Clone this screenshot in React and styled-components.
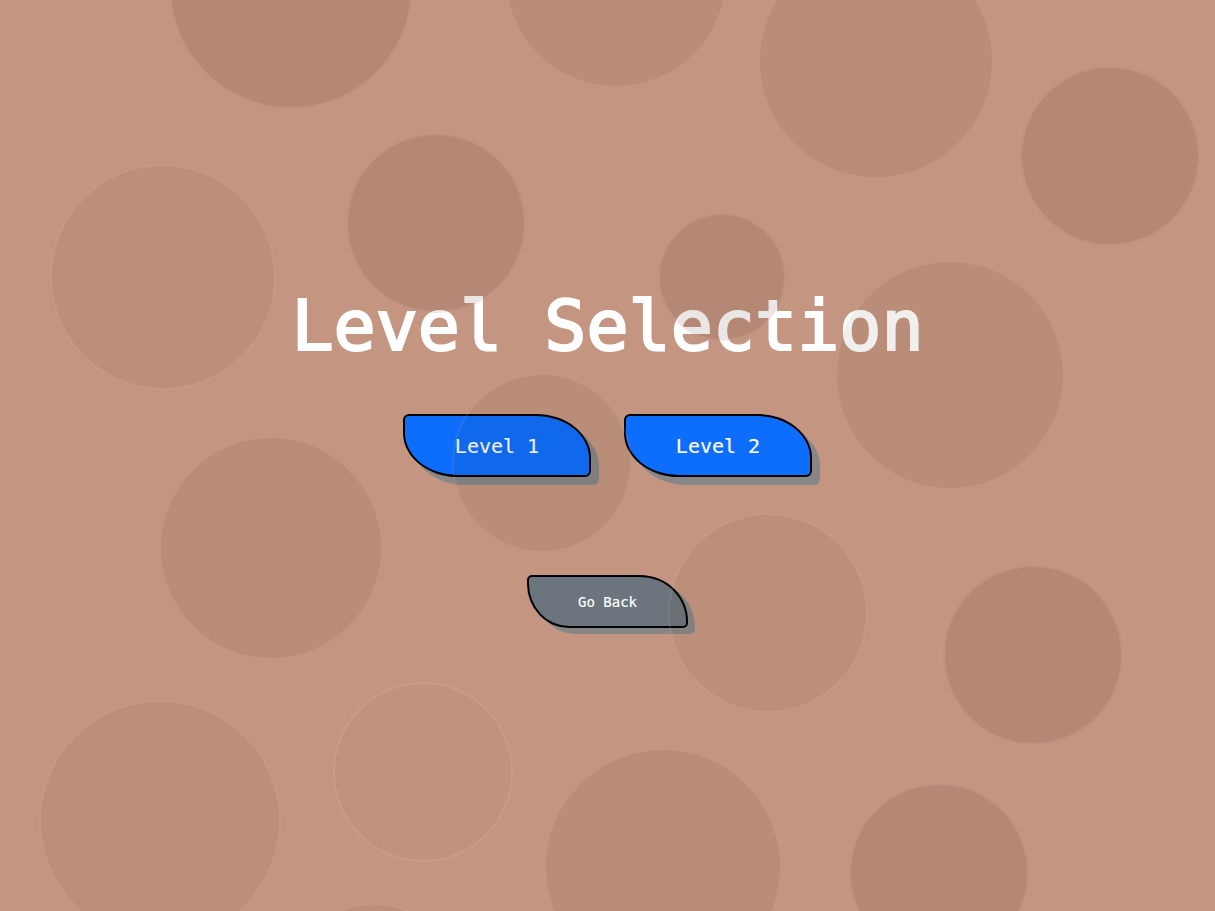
import React from "react";
import styled, { createGlobalStyle } from "styled-components";

const GlobalStyle = createGlobalStyle`
  html, body {
    margin: 0;
    padding: 0;
    background: #c49682;
    overflow: hidden;
  }
  * { box-sizing: border-box; }
`;

const Page = styled.main`
  position: relative;
  width: 100%;
  height: 911px;
  overflow: hidden;
  background: #c49682;
  display: flex;
  flex-direction: column;
  align-items: center;
  padding-top: 284px;
  font-family: "DejaVu Sans Mono", "Liberation Mono", monospace;
`;

const Title = styled.h1`
  margin: 0;
  font-size: 70px;
  line-height: 84px;
  font-weight: 400;
  -webkit-text-stroke: 2.2px #ffffff;
  color: #ffffff;
  letter-spacing: 0;
`;

const ButtonRow = styled.div`
  display: flex;
  gap: 33px;
  margin-top: 46px;
`;

const ShapedButton = styled.button`
  width: ${(p) => (p.$small ? 161 : 188)}px;
  height: ${(p) => (p.$small ? 53 : 63)}px;
  border: 2px solid #000;
  border-radius: ${(p) =>
    p.$small
      ? "5px 48px 5px 42px / 5px 46px 5px 44px"
      : "6px 55px 6px 55px / 6px 44px 6px 44px"};
  background: ${(p) => (p.$variant === "secondary" ? "#6c757d" : "#0d6efd")};
  color: #ffffff;
  font-family: "DejaVu Sans Mono", "Liberation Mono", monospace;
  font-size: ${(p) => (p.$small ? 14 : 20)}px;
  -webkit-text-stroke: 0.15px #ffffff;
  box-shadow: ${(p) => (p.$small ? "7px 6px 0 #878787" : "8px 8px 0 #878787")};
  cursor: pointer;
  padding: 0;
  display: flex;
  align-items: center;
  justify-content: center;
`;

const BackWrap = styled.div`
  margin-top: 98px;
`;

const BubbleLayer = styled.div`
  position: absolute;
  inset: 0;
  pointer-events: none;
`;

const Bubble = styled.div`
  position: absolute;
  border-radius: 50%;
  background: rgba(60, 30, 20, ${(p) => p.$a});
  border: 2px solid rgba(255, 235, 225, 0.11);
`;

const bubbles = [
  [291, -13, 122, 0.11],
  [616, -24, 112, 0.07],
  [876, 61, 118, 0.07],
  [1110, 156, 90, 0.11],
  [436, 223, 90, 0.11],
  [163, 277, 113, 0.06],
  [722, 277, 64, 0.11],
  [950, 375, 115, 0.07],
  [542, 463, 90, 0.07],
  [271, 548, 112, 0.07],
  [768, 613, 100, 0.06],
  [1033, 655, 90, 0.11],
  [423, 772, 90, 0.025],
  [160, 821, 121, 0.06],
  [663, 867, 119, 0.07],
  [939, 873, 90, 0.11],
  [373, 993, 90, 0.06],
];

export default function App() {
  return (
    <>
      <GlobalStyle />
      <Page>
        <Title>Level Selection</Title>
        <ButtonRow>
          <ShapedButton>Level 1</ShapedButton>
          <ShapedButton>Level 2</ShapedButton>
        </ButtonRow>
        <BackWrap>
          <ShapedButton $small $variant="secondary">
            Go Back
          </ShapedButton>
        </BackWrap>
        <BubbleLayer>
          {bubbles.map(([x, y, r, a], i) => (
            <Bubble
              key={i}
              $a={a}
              style={{ left: x - r, top: y - r, width: r * 2, height: r * 2 }}
            />
          ))}
        </BubbleLayer>
      </Page>
    </>
  );
}
